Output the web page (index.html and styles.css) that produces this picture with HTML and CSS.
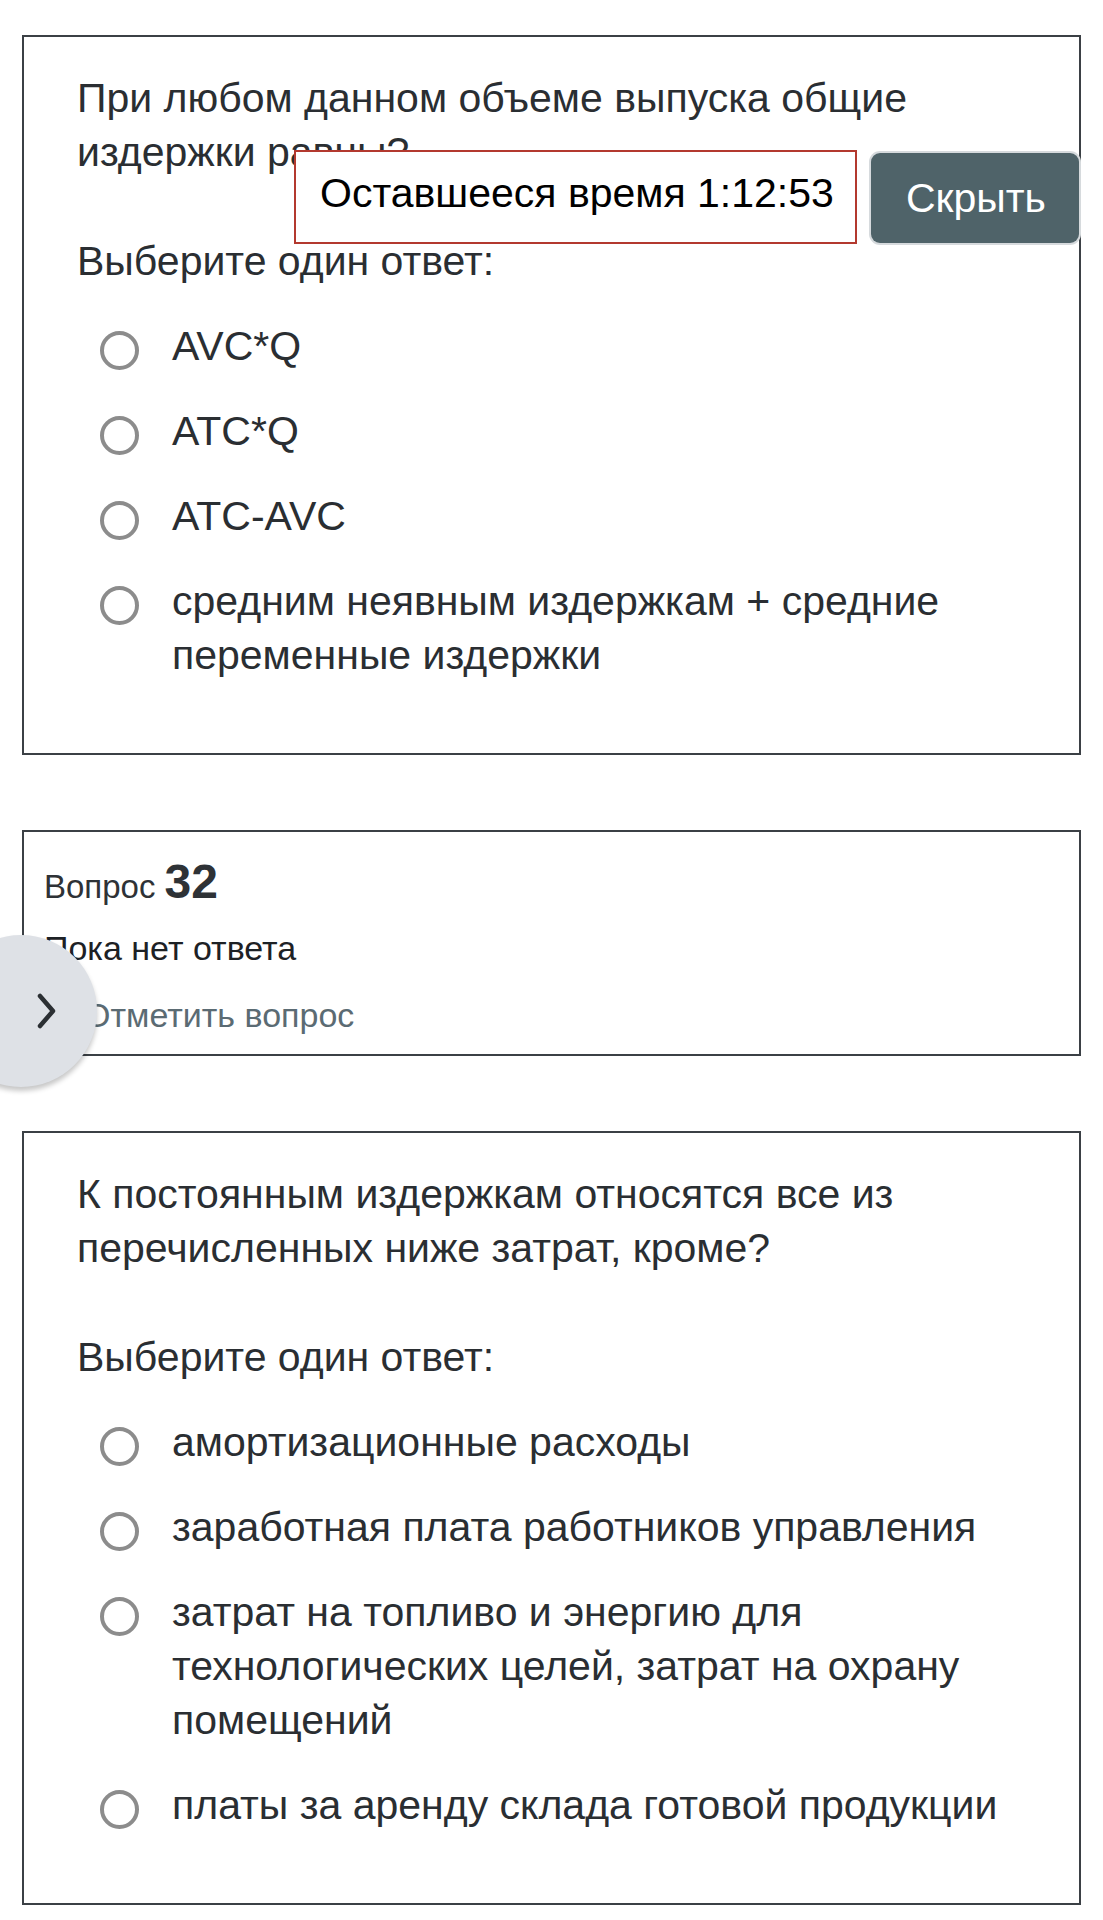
FILE: index.html
```html
<!DOCTYPE html>
<html lang="ru">
<head>
  <meta charset="UTF-8">
  <meta name="viewport" content="width=device-width, initial-scale=1.0">
  <title>Тест</title>
  <link rel="stylesheet" href="styles.css">
</head>
<body>

  <div class="page">
    <div class="que formulation">
      <div class="qtext">При любом данном объеме выпуска общие издержки равны?</div>
      <div class="prompt">Выберите один ответ:</div>
      <div class="answer">
        <label class="option"><input type="radio" name="q31"><span>AVC*Q</span></label>
        <label class="option"><input type="radio" name="q31"><span>ATC*Q</span></label>
        <label class="option"><input type="radio" name="q31"><span>ATC-AVC</span></label>
        <label class="option"><input type="radio" name="q31"><span>средним неявным издержкам + средние переменные издержки</span></label>
      </div>
    </div>

    <div class="que info">
      <h3 class="no">Вопрос <span class="qno">32</span></h3>
      <div class="state">Пока нет ответа</div>
      <div class="flag">
        <svg class="flag-icon" width="26" height="26" viewBox="0 0 24 24"><path d="M5 3v18M5 4h12l-3 4 3 4H5" fill="none" stroke="#5b6b73" stroke-width="2"/></svg>
        <span>Отметить вопрос</span>
      </div>
    </div>

    <div class="que formulation">
      <div class="qtext">К постоянным издержкам относятся все из перечисленных ниже затрат, кроме?</div>
      <div class="prompt">Выберите один ответ:</div>
      <div class="answer">
        <label class="option"><input type="radio" name="q32"><span>амортизационные расходы</span></label>
        <label class="option"><input type="radio" name="q32"><span>заработная плата работников управления</span></label>
        <label class="option"><input type="radio" name="q32"><span>затрат на топливо и энергию для технологических целей, затрат на охрану помещений</span></label>
        <label class="option"><input type="radio" name="q32"><span>платы за аренду склада готовой продукции</span></label>
      </div>
    </div>
  </div>

  <!-- quiz timer floats over the page -->
  <div class="timer-wrap">
    <div class="timer">Оставшееся время 1:12:53</div>
    <button class="hide-btn">Скрыть</button>
  </div>

  <button class="drawer-toggle">
    <svg width="22" height="36" viewBox="0 0 22 36"><path d="M4 3l13 15L4 33" fill="none" stroke="#2b2f33" stroke-width="4.5" stroke-linecap="round" stroke-linejoin="round"/></svg>
  </button>

</body>
</html>
```

FILE: styles.css
```css
body {
  margin: 0;
  font-family: "Liberation Sans", Arial, sans-serif;
  color: #2a2e32;
  background-color: #fff;
  position: relative;
  overflow-x: hidden;
}

.page {
  padding: 35px 22px 0;
}

.que {
  border: 2px solid #3b4045;
  margin-bottom: 75px;
}

.formulation {
  padding: 34px 40px 40px 53px;
  font-size: 41px;
  line-height: 54px;
}

.prompt {
  margin-top: 55px;
}

.answer {
  margin-top: 31px;
}

.option {
  display: flex;
  align-items: flex-start;
  padding-left: 23px;
  margin-bottom: 31px;
}

.option input {
  appearance: none;
  -webkit-appearance: none;
  flex: none;
  width: 39px;
  height: 39px;
  margin: 12px 33px 0 0;
  border: 4px solid #8c8c8c;
  border-radius: 50%;
  background: #fff;
  box-sizing: border-box;
}

/* question info box */
.info {
  padding: 26px 20px 14px;
  font-size: 34px;
  line-height: 49px;
}

.info .no {
  margin: 0;
  font-size: 33px;
  font-weight: normal;
  line-height: 52px;
  color: #2e3236;
}

.info .qno {
  font-size: 48px;
  font-weight: bold;
  line-height: 1;
}

.state {
  margin-top: 11px;
  color: #1d2125;
}

.flag {
  margin-top: 18px;
  display: flex;
  align-items: center;
  gap: 14px;
  color: #5b6b73;
}

.flag-icon {
  flex: none;
}

/* timer */
.timer-wrap {
  position: absolute;
  top: 150px;
  left: 294px;
  display: flex;
  align-items: flex-start;
  gap: 14px;
}

.timer {
  width: 563px;
  height: 94px;
  box-sizing: border-box;
  border: 2px solid #b3392f;
  background: #fff;
  padding-left: 24px;
  font-size: 41px;
  line-height: 82px;
  color: #000;
}

.hide-btn {
  margin-top: 3px;
  width: 208px;
  height: 90px;
  border: none;
  border-radius: 9px;
  background-color: #4f6369;
  box-shadow: 0 0 0 2px #d6dadd;
  color: #fff;
  font-family: "Liberation Sans", Arial, sans-serif;
  font-size: 41px;
  padding: 0 0 0 2px;
}

/* side drawer toggle */
.drawer-toggle {
  position: absolute;
  top: 935px;
  left: -55px;
  width: 152px;
  height: 152px;
  border: none;
  border-radius: 50%;
  background-color: #dee1e6;
  box-shadow: 0 4px 5px rgba(0, 0, 0, 0.22);
  padding: 0 0 0 91px;
  display: flex;
  align-items: center;
}
```
